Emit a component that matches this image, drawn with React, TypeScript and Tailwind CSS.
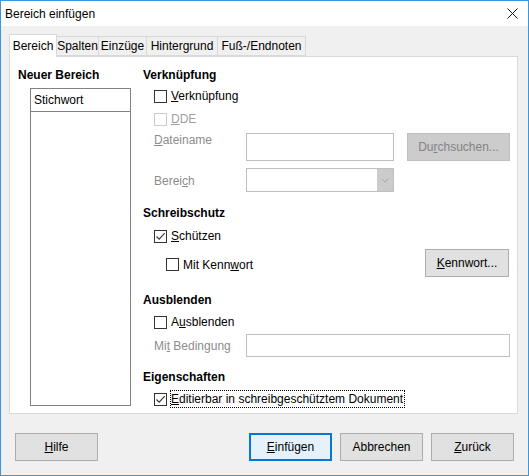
import React from "react";

const font = { fontFamily: '"Liberation Sans", Arial, sans-serif' };

function Check({ checked = false, disabled = false }: { checked?: boolean; disabled?: boolean }) {
  return (
    <span
      className={`flex h-[13px] w-[13px] shrink-0 items-center justify-center border bg-white ${
        disabled ? "border-[#cccccc]" : "border-[#333333]"
      }`}
    >
      {checked && (
        <svg width="11" height="11" viewBox="0 0 11 11">
          <path d="M1.5 5.5 L4.2 8.2 L9.7 2.2" fill="none" stroke="#333" strokeWidth="1.1" />
        </svg>
      )}
    </span>
  );
}

function Heading({ children }: { children: React.ReactNode }) {
  return <div className="flex h-[16px] items-center text-[12px] font-bold leading-[16px]">{children}</div>;
}

function Btn({
  children,
  w,
  focused = false,
  disabled = false,
}: {
  children: React.ReactNode;
  w: string;
  focused?: boolean;
  disabled?: boolean;
}) {
  return (
    <div
      className={`flex h-[28px] items-center justify-center text-[12px] ${w} ${
        focused
          ? "border-2 border-[#0078d7] bg-[#e5f1fb]"
          : disabled
          ? "border border-[#bfbfbf] bg-[#cccccc] text-[#838383]"
          : "border border-[#adadad] bg-[#e1e1e1]"
      }`}
    >
      {children}
    </div>
  );
}

export default function App() {
  return (
    <div
      style={font}
      className="flex h-[476px] w-[529px] flex-col border border-[#3a96dd] bg-[#f0f0f0] text-[12px] text-black"
    >
      {/* title bar */}
      <div className="flex h-[25px] shrink-0 items-center justify-between bg-white pl-[4px] pr-[10px]">
        <span className="leading-[16px]">Bereich einfügen</span>
        <svg width="11" height="11" viewBox="0 0 11 11">
          <path d="M0.5 0.5 L10.5 10.5 M10.5 0.5 L0.5 10.5" stroke="#111" strokeWidth="1" />
        </svg>
      </div>

      {/* tabs */}
      <div className="relative z-10 ml-[8px] mt-[8px] flex h-[22px] items-end">
        <div className="mb-[-1px] flex h-[23px] w-[48px] items-center justify-center border border-b-0 border-[#d9d9d9] bg-white">
          Bereich
        </div>
        <div className="flex h-[20px] w-[42px] items-center justify-center border-y border-r border-[#d9d9d9] bg-[#f0f0f0]">
          Spalten
        </div>
        <div className="flex h-[20px] w-[48px] items-center justify-center border-y border-r border-[#d9d9d9] bg-[#f0f0f0]">
          Einzüge
        </div>
        <div className="flex h-[20px] w-[71px] items-center justify-center border-y border-r border-[#d9d9d9] bg-[#f0f0f0]">
          Hintergrund
        </div>
        <div className="flex h-[20px] w-[88px] items-center justify-center border-y border-r border-[#d9d9d9] bg-[#f0f0f0]">
          Fuß-/Endnoten
        </div>
      </div>

      {/* panel */}
      <div className="ml-[8px] flex h-[358px] w-[509px] border border-[#d9d9d9] bg-white pt-[10px]">
        {/* left column */}
        <div className="flex w-[133px] shrink-0 flex-col">
          <div className="pl-[8px]">
            <Heading>Neuer Bereich</Heading>
          </div>
          <div className="ml-[20px] mt-[5px] flex h-[318px] w-[101px] flex-col border border-[#828282]">
            <div className="flex h-[23px] items-center border-b border-[#828282] pl-[3px]">Stichwort</div>
          </div>
        </div>

        {/* right column */}
        <div className="flex w-[367px] flex-col">
          <Heading>Verknüpfung</Heading>
          <div className="mt-[3px] flex h-[20px] items-center gap-[4px] pl-[11px]">
            <Check />
            <span>
              <u>V</u>erknüpfung
            </span>
          </div>
          <div className="mt-[3px] flex h-[20px] items-center gap-[4px] pl-[11px] text-[#a0a0a0]">
            <Check disabled />
            <span>
              <u>D</u>DE
            </span>
          </div>
          <div className="mt-[4px] flex h-[28px] items-start pl-[11px]">
            <span className="mt-[-1px] w-[92px] leading-[16px] text-[#8c8c8c]">
              <u>D</u>ateiname
            </span>
            <div className="h-[28px] w-[148px] border border-[#bfbfbf] bg-white" />
            <div className="ml-[13px]">
              <Btn w="w-[103px]" disabled>
                <span>
                  Du<u>r</u>chsuchen...
                </span>
              </Btn>
            </div>
          </div>
          <div className="mt-[7px] flex h-[24px] items-center pl-[11px]">
            <span className="w-[92px] pt-[1px] text-[#8c8c8c]">
              Berei<u>c</u>h
            </span>
            <div className="flex h-[24px] w-[148px] justify-end border border-[#bfbfbf] bg-white">
              <div className="flex w-[16px] items-center justify-center bg-[#cccccc]">
                <svg width="8" height="5" viewBox="0 0 8 5">
                  <path d="M0.5 0.5 L4 4 L7.5 0.5" fill="none" stroke="#a8a8a8" strokeWidth="1" />
                </svg>
              </div>
            </div>
          </div>

          <div className="mt-[13px]">
            <Heading>Schreibschutz</Heading>
          </div>
          <div className="mt-[5px] flex h-[20px] items-center gap-[4px] pl-[11px]">
            <Check checked />
            <span>
              <u>S</u>chützen
            </span>
          </div>
          <div className="mt-[3px] flex h-[28px] items-center pl-[23px]">
            <div className="flex items-center gap-[4px] pt-[3px]">
              <Check />
              <span>
                Mit Kenn<u>w</u>ort
              </span>
            </div>
            <div className="ml-auto mr-[1px]">
              <Btn w="w-[84px]">
                <span>
                  <u>K</u>ennwort...
                </span>
              </Btn>
            </div>
          </div>

          <div className="mt-[15px]">
            <Heading>Ausblenden</Heading>
          </div>
          <div className="mt-[4px] flex h-[20px] items-center gap-[4px] pl-[11px]">
            <Check />
            <span>
              A<u>u</u>sblenden
            </span>
          </div>
          <div className="mt-[2px] flex h-[23px] items-center pl-[11px]">
            <span className="w-[92px] text-[#8c8c8c]">
              Mi<u>t</u> Bedingung
            </span>
            <div className="h-[23px] w-[264px] border border-[#bfbfbf] bg-white" />
          </div>

          <div className="mt-[12px]">
            <Heading>Eigenschaften</Heading>
          </div>
          <div className="mt-[4px] flex h-[20px] items-center gap-[3px] pl-[11px]">
            <Check checked />
            <span className="border border-dotted border-black pr-[1px] leading-[16px]">
              <u>E</u>ditierbar in schreibgeschütztem Dokument
            </span>
          </div>
        </div>
      </div>

      {/* buttons */}
      <div className="mt-[19px] flex pl-[14px]">
        <Btn w="w-[83px]">
          <span>
            <u>H</u>ilfe
          </span>
        </Btn>
        <div className="ml-auto flex gap-[8px] pr-[14px]">
          <Btn w="w-[83px]" focused>
            <span>
              <u>E</u>infügen
            </span>
          </Btn>
          <Btn w="w-[83px]">Abbrechen</Btn>
          <Btn w="w-[83px]">
            <span>
              <u>Z</u>urück
            </span>
          </Btn>
        </div>
      </div>
    </div>
  );
}
